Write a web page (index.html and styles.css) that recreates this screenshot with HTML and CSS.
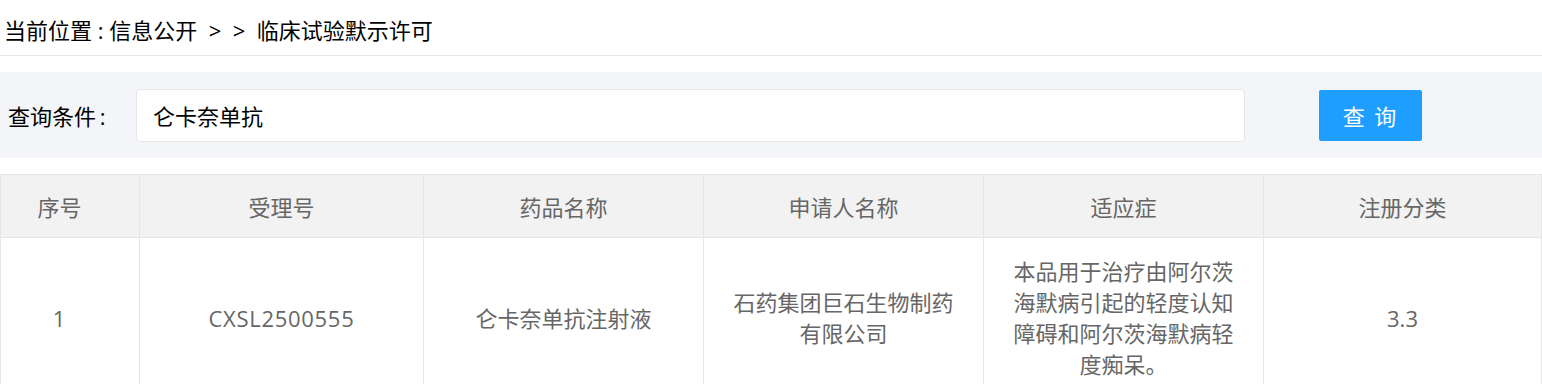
FILE: index.html
```html
<!DOCTYPE html>
<html lang="zh-CN">
<head>
  <meta charset="UTF-8" />
  <title>临床试验默示许可</title>
  <link rel="stylesheet" href="styles.css">
</head>
<body>

  <div class="crumb">当前位置 : 信息公开 &nbsp;&gt; &nbsp;&gt; &nbsp;临床试验默示许可</div>

  <form class="search" onsubmit="return false">
    <label for="keyword">查询条件&thinsp;:</label>
    <input type="text" id="keyword" value="仑卡奈单抗" />
    <button type="submit" class="search-btn">查 询</button>
  </form>

  <table class="result">
    <colgroup>
      <col style="width:139px">
      <col style="width:284px">
      <col style="width:280px">
      <col style="width:280px">
      <col style="width:280px">
      <col>
    </colgroup>
    <thead>
      <tr>
        <th class="num">序号</th>
        <th>受理号</th>
        <th>药品名称</th>
        <th>申请人名称</th>
        <th>适应症</th>
        <th>注册分类</th>
      </tr>
    </thead>
    <tbody>
      <tr>
        <td class="num">1</td>
        <td class="code">CXSL2500555</td>
        <td>仑卡奈单抗注射液</td>
        <td><div class="wrap">石药集团巨石生物制药有限公司</div></td>
        <td><div class="wrap">本品用于治疗由阿尔茨海默病引起的轻度认知障碍和阿尔茨海默病轻度痴呆。</div></td>
        <td>3.3</td>
      </tr>
    </tbody>
  </table>

</body>
</html>
```

FILE: styles.css
```css
body {
  margin: 0;
  font-family: "Open Sans", "Noto Sans CJK SC", sans-serif;
  font-size: 22px;
  color: #333;
  background: #fff;
}
.crumb {
  height: 55px;
  line-height: 60px;
  padding-left: 4px;
  color: #000;
  border-bottom: 1px solid #e6e6e6;
  white-space: pre;
}
.search {
  margin-top: 16px;
  height: 86px;
  background: #f4f5f9;
  display: flex;
  align-items: center;
}
.search label {
  width: 136px;
  padding-left: 8px;
  box-sizing: border-box;
  color: #000;
}
.search input {
  width: 1109px;
  height: 53px;
  box-sizing: border-box;
  border: 1px solid #e6e6e6;
  border-radius: 4px;
  padding: 0 16px;
  font: inherit;
  color: #000;
  background: #fff;
  outline: none;
}
.search-btn {
  margin-left: 74px;
  width: 103px;
  height: 51px;
  border: none;
  border-radius: 2px;
  background: #1e9fff;
  color: #fff;
  font: inherit;
  letter-spacing: 2px;
  cursor: pointer;
}
.result {
  margin-top: 16px;
  width: 100%;
  table-layout: fixed;
  border-collapse: collapse;
  color: #666;
}
.result th,
.result td {
  border: 1px solid #e6e6e6;
  text-align: center;
  font-weight: normal;
}
.result th {
  height: 60px;
  background: #f2f2f2;
}
.result td {
  padding: 18px 0;
  line-height: 31px;
}
.result .num {
  padding-right: 22px;
}
.result td.code {
  letter-spacing: 0.7px;
}
.result td .wrap {
  width: 232px;
  margin: 0 auto;
}
```
